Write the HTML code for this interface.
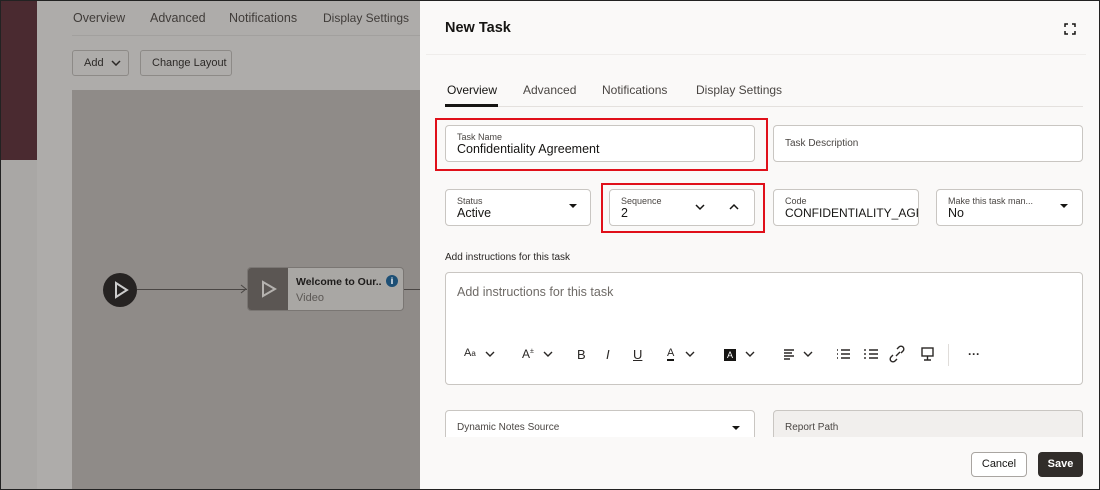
<!DOCTYPE html>
<html><head><meta charset="utf-8"><style>
*{box-sizing:border-box;margin:0;padding:0}
body{width:1100px;height:490px;overflow:hidden;font-family:"Liberation Sans",sans-serif;background:#fff;position:relative}
.abs{position:absolute;white-space:nowrap}
.frame{position:absolute;left:0;top:0;width:1100px;height:490px;border:1px solid #222;pointer-events:none;z-index:10}
.lt{color:#403c39;font-size:12.5px}
.fld{position:absolute;background:#fff;border:1px solid #c9c6c2;border-radius:4px}
.lbl{position:absolute;font-size:9px;color:#4a4643;white-space:nowrap}
.val{position:absolute;font-size:12.5px;color:#161513;white-space:nowrap}
.red{position:absolute;border:2px solid #e0101a}
.tb{position:absolute;top:347px;font-size:12px;color:#2a2725;white-space:nowrap}
</style></head><body>
<div class="abs" style="left:0;top:0;width:37px;height:160px;background:#4a2a30"></div>
<div class="abs" style="left:0;top:160px;width:37px;height:330px;background:#a9a7a5"></div>
<div class="abs" style="left:37px;top:0;width:383px;height:490px;background:#aeacaa"></div>
<div class="abs lt" style="left:73px;top:11px">Overview</div>
<div class="abs lt" style="left:150px;top:11px">Advanced</div>
<div class="abs lt" style="left:229px;top:11px">Notifications</div>
<div class="abs lt" style="left:323px;top:11px;font-size:12px">Display Settings</div>
<div class="abs" style="left:72px;top:35px;width:348px;height:1px;background:#a2a09e"></div>
<div class="abs" style="left:72px;top:50px;width:57px;height:26px;border:1px solid #8d8a87;border-radius:3px;font-size:11px;color:#2c2927;padding:6px 0 0 11px">Add</div>
<svg class="abs" style="left:111px;top:60px" width="10" height="6"><path d="M1 1L5 5L9 1" fill="none" stroke="#2c2927" stroke-width="1.5"/></svg>
<div class="abs" style="left:140px;top:50px;width:92px;height:26px;border:1px solid #8d8a87;border-radius:3px;font-size:11px;color:#2c2927;padding:6px 0 0 11px">Change Layout</div>
<div class="abs" style="left:72px;top:90px;width:348px;height:400px;background:#8f8b88"></div>
<div class="abs" style="left:103px;top:273px;width:34px;height:34px;border-radius:50%;background:#262322"></div>
<svg class="abs" style="left:112px;top:281px" width="18" height="18"><path d="M4 2 L15 9 L4 16 Z" fill="none" stroke="#ccc" stroke-width="2"/></svg>
<div class="abs" style="left:137px;top:289px;width:110px;height:1px;background:#4a4644"></div>
<svg class="abs" style="left:240px;top:284px" width="8" height="10"><path d="M1 1 L6 5 L1 9" fill="none" stroke="#4a4644"/></svg>
<div class="abs" style="left:247px;top:267px;width:157px;height:44px;border:1px solid #7a7673;border-radius:4px;background:#a9a7a4;overflow:hidden">
<div class="abs" style="left:0;top:0;width:40px;height:44px;background:#5b5653"></div>
<svg class="abs" style="left:12px;top:12px" width="18" height="18"><path d="M3 2 L15 9 L3 16 Z" fill="none" stroke="#b5b2af" stroke-width="2"/></svg>
<div class="abs" style="left:48px;top:8px;font-size:10.5px;font-weight:bold;color:#1e1c1b">Welcome to Our..</div>
<div class="abs" style="left:48px;top:24px;font-size:11px;color:#5c5855">Video</div>
<div class="abs" style="left:138px;top:7px;width:12px;height:12px;border-radius:50%;background:#1d4f75;color:#fff;font-size:9px;text-align:center;line-height:12px;font-weight:bold">i</div>
</div>
<div class="abs" style="left:404px;top:289px;width:16px;height:1px;background:#4a4644"></div>
<div class="abs" style="left:420px;top:0;width:680px;height:490px;background:#faf9f8"></div>
<div class="abs" style="left:445px;top:20px;font-size:14.5px;font-weight:bold;color:#161513">New Task</div>
<svg class="abs" style="left:1064px;top:23px" width="12" height="12"><path d="M1 4V1H4M8 1H11V4M11 8V11H8M4 11H1V8" fill="none" stroke="#161513" stroke-width="1.5"/></svg>
<div class="abs" style="left:426px;top:54px;width:660px;height:1px;background:#efedeb"></div>
<div class="abs" style="left:447px;top:83px;font-size:12px;color:#161513">Overview</div>
<div class="abs" style="left:523px;top:83px;font-size:12px;color:#4a4643">Advanced</div>
<div class="abs" style="left:602px;top:83px;font-size:12px;color:#4a4643">Notifications</div>
<div class="abs" style="left:696px;top:83px;font-size:12px;color:#4a4643">Display Settings</div>
<div class="abs" style="left:445px;top:106px;width:638px;height:1px;background:#e4e1de"></div>
<div class="abs" style="left:445px;top:104px;width:53px;height:3px;background:#161513"></div>

<div class="fld" style="left:445px;top:125px;width:310px;height:37px"></div>
<div class="lbl" style="left:457px;top:132px">Task Name</div>
<div class="val" style="left:457px;top:142px">Confidentiality Agreement</div>
<div class="red" style="left:435px;top:118px;width:333px;height:53px"></div>
<div class="fld" style="left:773px;top:125px;width:310px;height:37px"></div>
<div class="lbl" style="left:785px;top:138px;font-size:10px">Task Description</div>

<div class="fld" style="left:445px;top:189px;width:146px;height:37px"></div>
<div class="lbl" style="left:457px;top:196px">Status</div>
<div class="val" style="left:457px;top:206px">Active</div>
<svg class="abs" style="left:568px;top:203px" width="10" height="6"><path d="M1 1H9L5 5Z" fill="#161513"/></svg>
<div class="fld" style="left:609px;top:189px;width:146px;height:37px"></div>
<div class="lbl" style="left:621px;top:196px">Sequence</div>
<div class="val" style="left:621px;top:206px">2</div>
<svg class="abs" style="left:694px;top:203px" width="50" height="8"><path d="M2 2L6 6L10 2M36 6L40 2L44 6" fill="none" stroke="#161513" stroke-width="1.5"/></svg>
<div class="red" style="left:601px;top:183px;width:164px;height:50px"></div>
<div class="fld" style="left:773px;top:189px;width:146px;height:37px;overflow:hidden"><div class="val" style="left:11px;top:16px;font-size:12px">CONFIDENTIALITY_AGREEMENT</div><div class="lbl" style="left:11px;top:6px">Code</div></div>
<div class="fld" style="left:936px;top:189px;width:147px;height:37px"></div>
<div class="lbl" style="left:948px;top:196px">Make this task man...</div>
<div class="val" style="left:948px;top:206px">No</div>
<svg class="abs" style="left:1059px;top:203px" width="10" height="6"><path d="M1 1H9L5 5Z" fill="#161513"/></svg>

<div class="abs" style="left:445px;top:252px;font-size:10px;color:#2a2725">Add instructions for this task</div>
<div class="fld" style="left:445px;top:272px;width:638px;height:113px"></div>
<div class="abs" style="left:457px;top:285px;font-size:12.5px;color:#6f6b67">Add instructions for this task</div>
<svg class="abs" style="left:460px;top:342px" width="560" height="24" fill="none" stroke="#2a2725" stroke-width="1.4">
<path d="M26 10L30 14L34 10M84 10L88 14L92 10M226 10L230 14L234 10M286 10L290 14L294 10M344 10L348 14L352 10"/>
<path d="M324 8H334M324 11H332M324 14H334M324 17H330"/>
<path d="M381 8H390M381 12H390M381 16H390M377 8h1M377 12h1M377 16h1"/>
<path d="M409 8H418M409 12H418M409 16H418M405 7v2M405 11v2M405 15v2"/>
<path d="M433 13l-2 2a2.5 2.5 0 0 0 4 4l2-2M441 11l2-2a2.5 2.5 0 0 0-4-4l-2 2M436 14l4-4"/>
<rect x="462" y="6" width="11" height="8"/><path d="M467.5 14v4M464 18h7"/>
</svg>
<div class="tb" style="left:464px;font-size:11px">A<span style="font-size:8px">a</span></div>
<div class="tb" style="left:522px">A<sup style="font-size:7px">±</sup></div>
<div class="tb" style="left:577px;font-size:13px">B</div>
<div class="tb" style="left:606px;font-size:13px;font-style:italic">I</div>
<div class="tb" style="left:633px;font-size:13px;text-decoration:underline">U</div>
<div class="tb" style="left:667px;border-bottom:2px solid #161513;line-height:12px;font-size:11px">A</div>
<div class="tb" style="left:724px;width:12px;height:12px;background:#161513;color:#fff;font-size:9px;text-align:center;line-height:12px;top:349px">A</div>
<div class="abs" style="left:948px;top:344px;width:1px;height:22px;background:#e0ddda"></div>
<div class="tb" style="left:968px;font-weight:bold">···</div>

<div class="fld" style="left:445px;top:410px;width:310px;height:40px"></div>
<div class="abs" style="left:457px;top:422px;font-size:10px;color:#4a4643">Dynamic Notes Source</div>
<svg class="abs" style="left:731px;top:425px" width="10" height="6"><path d="M1 1H9L5 5Z" fill="#161513"/></svg>
<div class="fld" style="left:773px;top:410px;width:310px;height:40px;background:#f1efed"></div>
<div class="abs" style="left:785px;top:422px;font-size:10px;color:#4a4643">Report Path</div>
<div class="abs" style="left:420px;top:437px;width:680px;height:53px;background:#faf9f8"></div>
<div class="abs" style="left:971px;top:452px;width:56px;height:25px;border:1px solid #a9a5a1;border-radius:4px;background:#fff;font-size:11px;text-align:center;line-height:23px;color:#161513">Cancel</div>
<div class="abs" style="left:1038px;top:452px;width:45px;height:25px;border-radius:4px;background:#312d2a;font-size:11px;font-weight:bold;text-align:center;line-height:25px;color:#fff">Save</div>
<div class="frame"></div>
</body></html>
